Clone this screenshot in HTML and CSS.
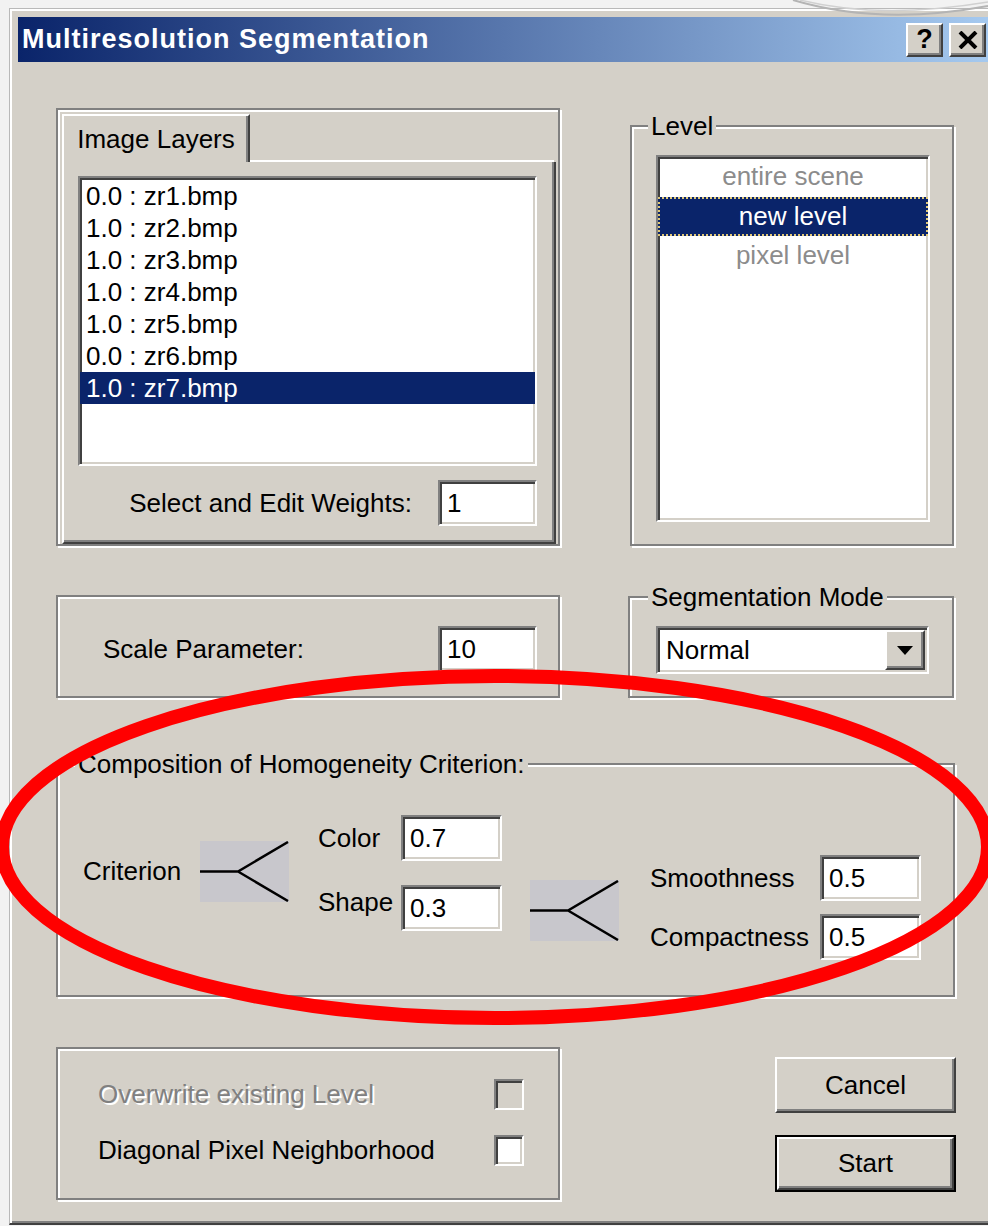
FILE: index.html
```html
<!DOCTYPE html>
<html lang="en">
<head>
<meta charset="utf-8">
<title>Multiresolution Segmentation</title>
<link rel="stylesheet" href="styles.css">
</head>
<body>
<div class="desk">
  <div class="window">
    <div class="titlebar">
      <span class="title">Multiresolution Segmentation</span>
      <div class="caption-buttons">
        <span class="cap-btn help">?</span>
        <span class="cap-btn close">
          <svg width="20" height="18" viewBox="0 0 20 18"><path d="M2 1 L18 17 M18 1 L2 17" stroke="#000" stroke-width="4" fill="none"/></svg>
        </span>
      </div>
    </div>

    <div class="client">
      <div class="row row-top">
        <div class="etched layers-box">
          <div class="tabs">
            <div class="tab">Image Layers</div>
            <div class="tab-rest"></div>
          </div>
          <div class="tab-page">
            <ul class="sunken listbox layers-list">
              <li>0.0 : zr1.bmp</li>
              <li>1.0 : zr2.bmp</li>
              <li>1.0 : zr3.bmp</li>
              <li>1.0 : zr4.bmp</li>
              <li>1.0 : zr5.bmp</li>
              <li>0.0 : zr6.bmp</li>
              <li class="sel">1.0 : zr7.bmp</li>
            </ul>
            <div class="weights">
              <span>Select and Edit Weights:</span>
              <span class="sunken edit">1</span>
            </div>
          </div>
        </div>

        <fieldset class="group level-group">
          <legend>Level</legend>
          <ul class="sunken listbox level-list">
            <li class="dim">entire scene</li>
            <li class="sel focus">new level</li>
            <li class="dim">pixel level</li>
          </ul>
        </fieldset>
      </div>

      <div class="row row-mid">
        <div class="etched scale-box">
          <span>Scale Parameter:</span>
          <span class="sunken edit">10</span>
        </div>
        <fieldset class="group mode-group">
          <legend>Segmentation Mode</legend>
          <div class="sunken combo">
            <span class="combo-text">Normal</span>
            <span class="raised combo-btn">
              <svg width="16" height="9" viewBox="0 0 16 9"><path d="M0 0 H16 L8 9 Z" fill="#000"/></svg>
            </span>
          </div>
        </fieldset>
      </div>

      <fieldset class="group comp-group">
        <legend>Composition of Homogeneity Criterion:</legend>
        <div class="comp">
          <span class="crit-label">Criterion</span>
          <svg class="fork fork-main" width="89" height="61" viewBox="0 0 89 61">
            <rect width="89" height="61" fill="#c8c7cc"/>
            <path d="M0 30.5 H38 L88 1 M38 30.5 L88 60" stroke="#000" stroke-width="2.5" fill="none"/>
          </svg>
          <div class="pair pair-main">
            <div class="field"><span class="flabel">Color</span><span class="sunken edit">0.7</span></div>
            <div class="field"><span class="flabel lift">Shape</span><span class="sunken edit">0.3</span></div>
          </div>
          <svg class="fork fork-shape" width="89" height="61" viewBox="0 0 89 61">
            <rect width="89" height="61" fill="#c8c7cc"/>
            <path d="M0 30.5 H38 L88 1 M38 30.5 L88 60" stroke="#000" stroke-width="2.5" fill="none"/>
          </svg>
          <div class="pair pair-shape">
            <div class="field"><span class="flabel wide">Smoothness</span><span class="sunken edit">0.5</span></div>
            <div class="field"><span class="flabel wide">Compactness</span><span class="sunken edit">0.5</span></div>
          </div>
        </div>
      </fieldset>

      <div class="row row-bottom">
        <div class="etched options-box">
          <div class="opt disabled">
            <span>Overwrite existing Level</span>
            <span class="sunken check check-off"></span>
          </div>
          <div class="opt">
            <span>Diagonal Pixel Neighborhood</span>
            <span class="sunken check"></span>
          </div>
        </div>
        <div class="buttons">
          <div class="raised btn">Cancel</div>
          <div class="btn default"><div class="raised btn-face">Start</div></div>
        </div>
      </div>
    </div>
  </div>

  <svg class="markup" width="988" height="1226" viewBox="0 0 988 1226">
    <path d="M793 0 Q 880 26 988 6" stroke="#b4b4b4" stroke-width="2" fill="none"/>
    <path d="M800 0 Q 880 20 988 2" stroke="#d0d0d0" stroke-width="1.5" fill="none"/>
    <ellipse cx="495" cy="847" rx="493" ry="171" stroke="#ff0000" stroke-width="14" fill="none"/>
  </svg>
</div>
</body>
</html>
```

FILE: styles.css
```css
html, body {
  margin: 0;
  padding: 0;
  overflow: hidden;
}

body {
  width: 988px;
  height: 1226px;
  background: #f2f2f2;
  font-family: "Liberation Sans", Arial, sans-serif;
  font-size: 26px;
  color: #000;
}

.desk {
  position: relative;
  width: 988px;
  height: 1226px;
  overflow: hidden;
}

/* ---------- 3D borders ---------- */
.sunken {
  box-sizing: border-box;
  border: 2px solid;
  border-color: #808080 #ffffff #ffffff #808080;
  box-shadow: inset 2px 2px 0 #404040, inset -2px -2px 0 #d4d0c8;
  background: #fff;
}

.raised {
  box-sizing: border-box;
  border: 2px solid;
  border-color: #ffffff #404040 #404040 #ffffff;
  box-shadow: inset -2px -2px 0 #808080;
  background: #d4d0c8;
}

.etched {
  box-sizing: border-box;
  border: 2px solid #808080;
  box-shadow: inset 2px 2px 0 #fff, 2px 2px 0 #fff;
}

/* ---------- window frame ---------- */
.window {
  box-sizing: border-box;
  margin: 8px 0 0 9px;
  width: 993px;
  height: 1217px;
  padding: 8px 8px 0 8px;
  background: #d4d0c8;
  border: 1px solid;
  border-color: #b9b9b9 #404040 #404040 #b9b9b9;
  border-bottom-width: 2px;
  box-shadow: inset 2px 2px 0 #fff, inset -2px -2px 0 #808080;
  overflow: hidden;
}

.titlebar {
  display: flex;
  align-items: center;
  height: 45px;
  padding: 0 7px 0 4px;
  background: linear-gradient(to right, #0a246a, #a6caf0);
}

.title {
  color: #fff;
  font-weight: bold;
  font-size: 27px;
  letter-spacing: 1px;
  white-space: nowrap;
}

.caption-buttons {
  margin-left: auto;
  display: flex;
  gap: 6px;
}

.cap-btn {
  box-sizing: border-box;
  width: 37px;
  height: 34px;
  display: flex;
  align-items: center;
  justify-content: center;
  background: #d4d0c8;
  border: 2px solid;
  border-color: #ffffff #404040 #404040 #ffffff;
  box-shadow: inset -2px -2px 0 #808080;
  font-weight: bold;
  font-size: 27px;
  line-height: 1;
}

/* ---------- client area ---------- */
.client {
  padding: 46px 0 0 38px;
}

.row {
  display: grid;
  grid-template-columns: 504px 324px;
  column-gap: 70px;
}

/* group boxes with caption; caption sits 16px in from the frame */
.group {
  margin: 0;
  min-width: 0;
  box-sizing: border-box;
  border: 2px solid #808080;
  box-shadow: inset 2px 2px 0 #fff, 2px 2px 0 #fff;
}

.group legend {
  padding: 0 3px;
  line-height: 26px;
  background: #d4d0c8;
}

/* ---------- image layers ---------- */
.layers-box {
  height: 438px;
  padding: 4px 2px 0 4px;
}

.tabs {
  display: flex;
  height: 48px;
}

.tab {
  box-sizing: border-box;
  width: 188px;
  height: 48px;
  display: flex;
  align-items: center;
  justify-content: center;
  border-left: 2px solid #fff;
  border-top: 2px solid #fff;
  border-right: 2px solid #404040;
  box-shadow: inset -2px 0 0 #808080;
}

.tab-rest {
  flex: 1;
  box-sizing: border-box;
  border-bottom: 2px solid #fff;
  margin-right: 2px;
}

.tab-page {
  box-sizing: border-box;
  height: 382px;
  padding: 14px 17px 16px 14px;
  border-left: 2px solid #fff;
  border-right: 2px solid #404040;
  border-bottom: 2px solid #404040;
  box-shadow: inset -2px -2px 0 #808080;
}

.listbox {
  margin: 0;
  list-style: none;
}

.layers-list {
  height: 290px;
  padding: 2px 0 0 0;
}

.layers-list li {
  height: 32px;
  line-height: 32px;
  padding-left: 6px;
  white-space: nowrap;
}

.listbox .sel {
  background: #0a246a;
  color: #fff;
}

.weights {
  margin-top: 14px;
  display: flex;
  justify-content: flex-end;
  align-items: center;
  gap: 26px;
}

.edit {
  box-sizing: border-box;
  display: flex;
  align-items: center;
  width: 99px;
  height: 46px;
  padding-left: 7px;
  white-space: nowrap;
}

/* ---------- level ---------- */
.level-group {
  margin-top: 5px;
  padding: 16px 22px 22px 24px;
}

.level-group legend {
  margin-left: -8px;
}

.level-list {
  height: 367px;
  padding: 0;
}

.level-list li {
  box-sizing: border-box;
  height: 39.5px;
  line-height: 35.5px;
  border: 2px solid transparent;
  text-align: center;
}

.level-list .dim {
  color: #8c8c8c;
}

.level-list .focus {
  border: 2px dotted #e0c878;
}

/* ---------- scale / mode ---------- */
.row-mid {
  margin-top: 38px;
}

.scale-box {
  margin-top: 11px;
  height: 103px;
  display: flex;
  align-items: center;
  padding: 5px 21px 0 45px;
}

.scale-box .edit {
  margin-left: auto;
}

.mode-group {
  margin-left: -2px;
  width: 326px;
  padding: 16px 0 22px 26px;
}

.mode-group legend {
  margin-left: -8px;
}

.combo {
  display: flex;
  align-items: center;
  width: 273px;
  height: 48px;
  padding: 2px;
}

.combo-text {
  flex: 1;
  padding-left: 6px;
}

.combo-btn {
  width: 40px;
  height: 40px;
  display: flex;
  align-items: center;
  justify-content: center;
}

/* ---------- homogeneity criterion ---------- */
.comp-group {
  margin-top: 53px;
  width: 899px;
  padding: 0 0 35px 25px;
}

.comp-group legend {
  margin-left: -8px;
}

.comp {
  display: flex;
  align-items: flex-start;
}

.crit-label {
  width: 117px;
  line-height: 30px;
  margin-top: 79px;
}

.fork {
  display: block;
  flex: none;
}

.fork-main {
  margin-top: 64px;
}

.pair {
  display: flex;
  flex-direction: column;
}

.pair-main {
  margin: 38px 0 0 29px;
  gap: 24px;
}

.fork-shape {
  margin: 103px 0 0 28px;
}

.pair-shape {
  margin: 78px 0 0 31px;
  gap: 13px;
}

.field {
  display: flex;
  align-items: center;
}

.field .edit {
  width: 101px;
}

.flabel {
  width: 83px;
}

.flabel.lift {
  margin-bottom: 12px;
}

.flabel.wide {
  width: 170px;
}

/* ---------- options & buttons ---------- */
.row-bottom {
  margin-top: 50px;
}

.options-box {
  padding: 30px 34px 32px 40px;
  display: flex;
  flex-direction: column;
  gap: 25px;
}

.opt {
  display: flex;
  align-items: center;
  justify-content: space-between;
}

.opt.disabled {
  color: #808080;
  text-shadow: 2px 2px 0 #fff;
}

.check {
  width: 30px;
  height: 31px;
}

.check-off {
  background: #d4d0c8;
}

.buttons {
  margin: 10px -2px 0 0;
  justify-self: end;
  display: flex;
  flex-direction: column;
  gap: 22px;
}

.btn {
  box-sizing: border-box;
  width: 181px;
  height: 56px;
  display: flex;
  align-items: center;
  justify-content: center;
}

.btn.default {
  height: 57px;
  border: 2px solid #000;
}

.btn-face {
  width: 100%;
  height: 100%;
  display: flex;
  align-items: center;
  justify-content: center;
}

/* ---------- freehand markup on top ---------- */
.markup {
  position: absolute;
  left: 0;
  top: 0;
  pointer-events: none;
}
```
